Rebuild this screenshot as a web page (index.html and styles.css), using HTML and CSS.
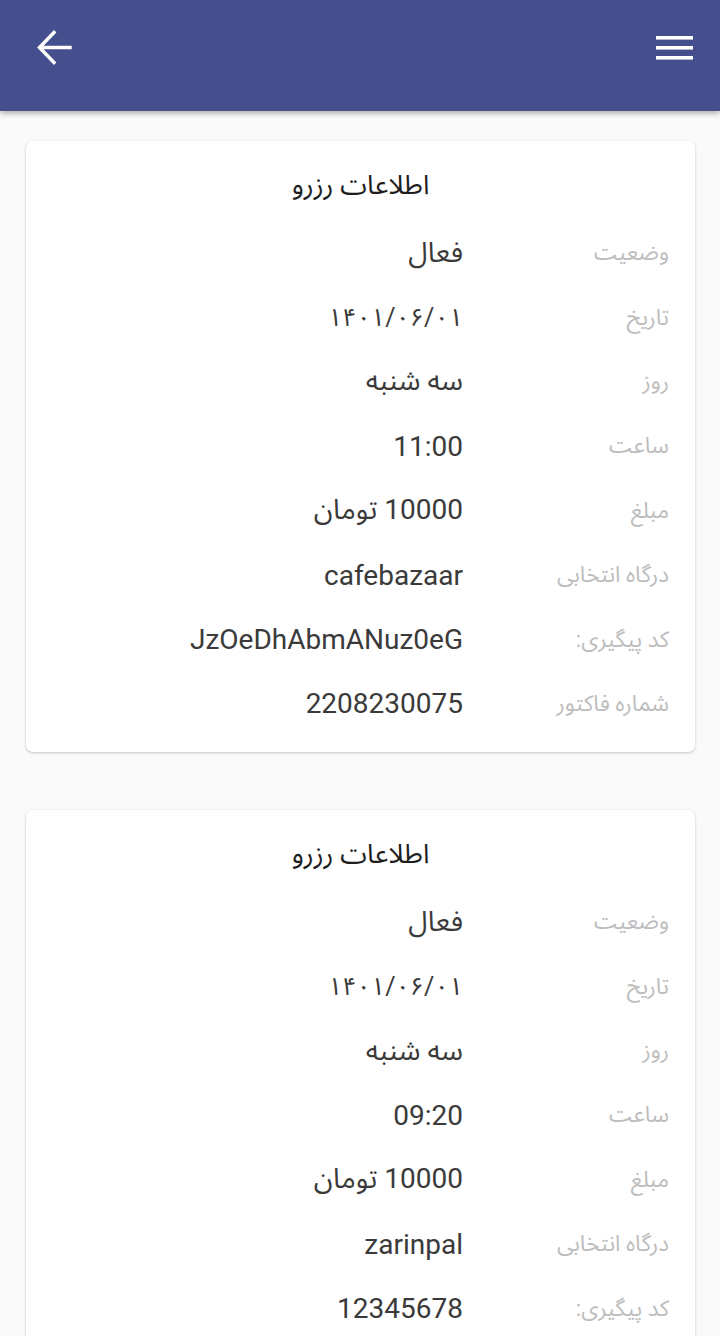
FILE: index.html
```html
<!DOCTYPE html>
<html lang="fa">
<head>
<meta charset="utf-8">
<title>اطلاعات رزرو</title>
<link rel="stylesheet" href="styles.css">
</head>
<body>
<header class="appbar">
  <button class="icon-btn back" aria-label="back">
    <svg width="40" height="40" viewBox="0 0 40 40"><path d="M35 19.5H5M19 4.5L4.5 19.5 19 34.5" fill="none" stroke="#fff" stroke-width="3.4" stroke-linecap="square"/></svg>
  </button>
  <button class="icon-btn menu" aria-label="menu">
    <svg width="38" height="26" viewBox="0 0 38 26"><rect x="0" y="1" width="37" height="3.6" fill="#fff"/><rect x="0" y="11" width="37" height="3.6" fill="#fff"/><rect x="0" y="21" width="37" height="3.6" fill="#fff"/></svg>
  </button>
</header>
<main class="content">
  <section class="card">
    <h2 class="card-title">اطلاعات رزرو</h2>
    <div class="rows">
      <div class="row"><span class="label">وضعیت</span><span class="value">فعال</span></div>
      <div class="row"><span class="label">تاریخ</span><span class="value date">۱۴۰۱/۰۶/۰۱</span></div>
      <div class="row"><span class="label">روز</span><span class="value">سه شنبه</span></div>
      <div class="row"><span class="label">ساعت</span><span class="value">11:00</span></div>
      <div class="row"><span class="label">مبلغ</span><span class="value">10000 تومان</span></div>
      <div class="row"><span class="label">درگاه انتخابی</span><span class="value">cafebazaar</span></div>
      <div class="row"><span class="label">کد پیگیری:</span><span class="value">JzOeDhAbmANuz0eG</span></div>
      <div class="row"><span class="label">شماره فاکتور</span><span class="value">2208230075</span></div>
    </div>
  </section>
  <section class="card">
    <h2 class="card-title">اطلاعات رزرو</h2>
    <div class="rows">
      <div class="row"><span class="label">وضعیت</span><span class="value">فعال</span></div>
      <div class="row"><span class="label">تاریخ</span><span class="value date">۱۴۰۱/۰۶/۰۱</span></div>
      <div class="row"><span class="label">روز</span><span class="value">سه شنبه</span></div>
      <div class="row"><span class="label">ساعت</span><span class="value">09:20</span></div>
      <div class="row"><span class="label">مبلغ</span><span class="value">10000 تومان</span></div>
      <div class="row"><span class="label">درگاه انتخابی</span><span class="value">zarinpal</span></div>
      <div class="row"><span class="label">کد پیگیری:</span><span class="value">12345678</span></div>
      <div class="row"><span class="label">شماره فاکتور</span><span class="value">2208230075</span></div>
    </div>
  </section>
</main>
</body>
</html>
```
FILE: styles.css
```css
html, body {
  margin: 0;
  padding: 0;
}
body {
  background: #fafafa;
  font-family: Roboto, "Noto Sans Arabic", "Vazirmatn", "DejaVu Sans", sans-serif;
  height: 1336px;
  overflow: hidden;
}
.appbar {
  height: 111px;
  background: #454f8e;
  display: flex;
  justify-content: space-between;
  align-items: flex-start;
  padding: 0 26px 0 35px;
  box-shadow: 0 2px 6px rgba(0, 0, 0, 0.35);
  position: relative;
  z-index: 1;
}
.icon-btn {
  background: none;
  border: 0;
  padding: 0;
  display: flex;
  cursor: pointer;
}
.back {
  margin-top: 28px;
}
.menu {
  margin-top: 35px;
}
.content {
  padding: 30px 25px 0 26px;
  display: flex;
  flex-direction: column;
  gap: 58px;
}
.card {
  background: #fff;
  border-radius: 7px;
  box-shadow: 0 1px 3px rgba(0, 0, 0, 0.22);
  direction: rtl;
  padding: 24px 26px 16px;
}
.card-title {
  margin: 0 0 16px;
  text-align: center;
  font-weight: normal;
  font-size: 27px;
  line-height: 40px;
  color: #1e1e1e;
}
.row {
  display: grid;
  grid-template-columns: 180px 1fr;
  column-gap: 26px;
  align-items: center;
  height: 64.4px;
}
.label {
  font-size: 22.5px;
  color: #bdbdbd;
  text-align: right;
}
.value {
  font-size: 28px;
  color: #3a3a3a;
  text-align: right;
}
.date {
  font-size: 25px;
  letter-spacing: -4px;
}
```
